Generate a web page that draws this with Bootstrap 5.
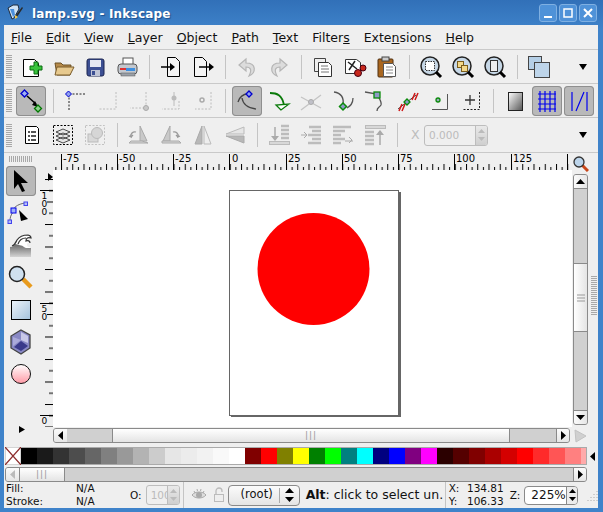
<!DOCTYPE html>
<html lang="en"><head><meta charset="utf-8"><title>lamp.svg - Inkscape</title>
<link rel="stylesheet" href="https://cdn.jsdelivr.net/npm/bootstrap@5.3.0/dist/css/bootstrap.min.css">
<style>
html,body{margin:0;background:#2f6db5;overflow:hidden}
body{font-family:"DejaVu Sans",sans-serif;font-size:12.5px;color:#000;line-height:1}
.win{width:603px;height:512px;background:linear-gradient(#3170b8,#3f83ca 30px);}
.title{height:25px;color:#fff;font-weight:700;font-size:12px;padding:3px 0 0 7px;text-shadow:1px 1px 1px #1d4f8d;letter-spacing:.2px}
.title>svg{margin:-3px 8px 0 0}
.wbtn{width:18px;height:18px;border:1px solid #7fb0e2;border-radius:3px;background:#4f92d8;margin-left:2px;padding:0;flex:none}
.wbtns{margin:-3px 6px 0 auto}
.body{margin:0 5px 4px 4px;height:483px;background:#efefef}
.menu{height:25px;border-bottom:1px solid #c9c9c9;padding:2px 0 0 0;color:#111}
.menu span{padding:0 7px}
.tbar{height:34px;border-bottom:1px solid #c9c9c9}
.tbar.t3{height:35px}
.grip{margin-left:2px;margin-right:3px;width:6px;height:23px;background:repeating-linear-gradient(#a8a8a8 0 1px,transparent 1px 2px)}
.tb{width:32px;height:32px;padding:0;border:0;border-radius:4px;flex:none}
.tb.on{position:relative;background:#b9b9b9;box-shadow:inset 0 0 0 1px #8f8f8f;width:30px;height:30px;margin:0 1px}
.sep{width:12px;height:24px;flex:none;background:linear-gradient(#c4c4c4,#c4c4c4) center/1px 100% no-repeat}
.more{width:30px;height:20px;flex:none}
.lbl{color:#bdbdbd}
.spin{border:1px solid #bdbdbd;border-radius:3px;background:#efefef;color:#bbb;overflow:hidden}
.spin .v{flex:1;padding-left:4px;overflow:hidden;white-space:nowrap}
.spin .ar{width:12px;height:100%;border-left:1px solid #bdbdbd;background:linear-gradient(#e9e9e9,#cfcfcf)}
.main{height:292px}
.left{width:36px}
.hgrip{width:23px;height:6px;margin:3px 0 3px 5px;background:repeating-linear-gradient(90deg,#a8a8a8 0 1px,transparent 1px 2px);flex:none}
.tool{width:30px;height:32px;flex:none;padding:0;border:0;margin-left:2px}
.tool.on{background:#b9b9b9;box-shadow:inset 0 0 0 1px #8f8f8f;border-radius:4px;height:30px;margin-bottom:2px;margin-top:1px}
.center{width:532px}
.vrul{width:13px;flex:none}
.canvas{width:519px;height:257px;background:#fff;flex:none}
.sb{border:1px solid #8a8a8a;border-radius:3px;background:#d0d0d0;overflow:hidden}
.st{background:linear-gradient(#fbfbfb,#e6e6e6);flex:none;width:13px;height:100%}
.thumb{background:linear-gradient(#fff,#e4e4e4);border-left:1px solid #8a8a8a;border-right:1px solid #8a8a8a;height:100%;color:#999;letter-spacing:1px;font-size:9px}
.hs{height:15px;width:517px;margin:1px 0 0 13px}
.scol{width:17px}
.vs{width:15px;height:251px;margin:2px 0 0 1px}
.vs .st{width:100%;height:14px;border-bottom:1px solid #8a8a8a;background:linear-gradient(90deg,#fbfbfb,#e6e6e6)}
.vs .st.dn{border-bottom:0;border-top:1px solid #8a8a8a}
.vthumb{height:69px;flex:none;background:linear-gradient(90deg,#fff,#e4e4e4);border-top:1px solid #8a8a8a;border-bottom:1px solid #8a8a8a;color:#999}
.vgrip{width:6px;height:39px;background:repeating-linear-gradient(#a8a8a8 0 1px,transparent 1px 2px);margin-left:2px}
.rcol{width:9px}
.pal{height:22px;padding-left:1px}
.sws{height:18px;border:1px solid #aaa;border-left:0;overflow:hidden;flex:none}
.sws i{display:block;width:16px;height:100%;flex:none}
.nocol{width:16px;height:18px;flex:none;background:#fff}
.ps{height:15px;width:582px;margin-left:1px;background:#d0d0d0}
.ps .thumb{width:46px;flex:none;border-left:1px solid #8a8a8a}
.status{height:26px;font-size:10.5px;padding-left:2px;color:#111}
.fs{width:124px;line-height:13px}
.fs b{font-weight:400;display:inline-block;width:70px}
.status .sep{height:26px;width:7px}
.combo{width:72px;height:21px;border:1px solid #8a8a8a;border-radius:4px;background:linear-gradient(#fbfbfb,#e4e4e4);font-size:11.5px}
.hint{font-size:12.5px;width:139px;white-space:nowrap;margin-left:6px}
.coord{line-height:13px;font-size:10.5px;width:57px}
.coord span{display:inline-block;width:15px}
.zoom{width:54px;height:19px;border:1px solid #8a8a8a;border-radius:4px;background:#fff;overflow:hidden;font-size:12px;margin-left:4px;flex:none}
.zoom .v{flex:1;padding-left:6px}
.zoom .ar{width:12px;height:100%;border-left:1px solid #8a8a8a;background:#ececec}
</style></head><body>
<div class="win d-flex flex-column">
<div class="title d-flex align-items-center">
<svg width="17" height="17" viewBox="0 0 17 17"><path d="M1 4 6 1h5l1 4-5 9-2 1z" fill="#cfe2f5" stroke="#1d2b3d"/><path d="M3 5l4 0 1 6-2 2z" fill="#4a8fdc"/><path d="M9 11 15 3l1 1-6 9z" fill="#2a2a2a"/><path d="M8 11l3 2-3 2z" fill="#f2c94c"/></svg>
<span>lamp.svg - Inkscape</span>
<div class="d-flex wbtns">
<div class="wbtn d-flex align-items-center justify-content-center"><svg width="12" height="12"><rect x="2" y="9" width="8" height="2" fill="#fff"/></svg></div>
<div class="wbtn d-flex align-items-center justify-content-center"><svg width="12" height="12"><rect x="2" y="2" width="8" height="8" fill="none" stroke="#fff" stroke-width="1.5"/></svg></div>
<div class="wbtn d-flex align-items-center justify-content-center"><svg width="12" height="12"><path d="M2 2l8 8M10 2l-8 8" stroke="#fff" stroke-width="2"/></svg></div>
</div></div>
<div class="body d-flex flex-column">
<nav class="menu d-flex align-items-center">
<span><u>F</u>ile</span><span><u>E</u>dit</span><span><u>V</u>iew</span><span><u>L</u>ayer</span><span><u>O</u>bject</span><span><u>P</u>ath</span><span><u>T</u>ext</span><span>Filter<u>s</u></span><span>Exte<u>n</u>sions</span><span><u>H</u>elp</span>
</nav>

<div class="tbar d-flex align-items-center">
<div class="grip"></div>
<button class="btn tb"><svg width="24" height="24" viewBox="0 0 24 24"><path d="M4.500 4.500h11l4 4v13h-15z" fill="#fff" stroke="#000"/><path d="M15 7h4v4h4v4h-4v4h-4v-4h-4v-4h4z" fill="#39c43c" stroke="#0b6a10"/></svg></button>
<button class="btn tb"><svg width="24" height="24" viewBox="0 0 24 24"><path d="M4 8h6l2 2h8l-1 10H6z" fill="#b68a4b" stroke="#6b5024"/><path d="M6 12h17l-4 8H4z" fill="#e7c98e" stroke="#7a5c2a"/></svg></button>
<button class="btn tb"><svg width="24" height="24" viewBox="0 0 24 24"><rect x="4" y="4" width="17" height="17" rx="2" fill="#3c4f93" stroke="#1b2450"/><rect x="7" y="5" width="11" height="7" fill="#e5e8f2"/><rect x="8" y="15" width="9" height="6" fill="#bfc4d6"/><rect x="9" y="16" width="3" height="4" fill="#3c4f93"/></svg></button>
<button class="btn tb"><svg width="24" height="24" viewBox="0 0 24 24"><rect x="8" y="3" width="10" height="7" fill="#fff" stroke="#555"/><rect x="3" y="9" width="19" height="10" rx="3" fill="#c3c8cf" stroke="#555"/><rect x="5" y="13" width="6" height="2" fill="#d33"/><rect x="11" y="13" width="9" height="3" fill="#3d8fe0"/><rect x="6" y="18" width="14" height="3" fill="#9aa0a8" stroke="#555" stroke-width=".5"/></svg></button>
<div class="sep"></div>
<button class="btn tb"><svg width="24" height="24" viewBox="0 0 24 24"><path d="M8.500 2.500h8l4 4v15h-12z" fill="#f4f4f4" stroke="#000"/><path d="M2 12h11" stroke="#000" stroke-width="1.500"/><path d="M11 8l5 4-5 4z"/></svg></button>
<button class="btn tb"><svg width="24" height="24" viewBox="0 0 24 24"><path d="M3.500 2.500h8l4 4v15h-12z" fill="#f4f4f4" stroke="#000"/><path d="M8 12h11" stroke="#000" stroke-width="1.500"/><path d="M18 8l5 4-5 4z"/></svg></button>
<div class="sep"></div>
<button class="btn tb"><svg width="24" height="24" viewBox="0 0 24 24"><path d="M11 4 4 10l7 6v-4c5 0 6 3 3 9 7-3 8-13-3-13z" fill="#dcdcdc" stroke="#b5b5b5" stroke-width="1.200"/></svg></button>
<button class="btn tb"><svg width="24" height="24" viewBox="0 0 24 24"><path d="M13 4l7 6-7 6v-4c-5 0-6 3-3 9-7-3-8-13 3-13z" fill="#dcdcdc" stroke="#b5b5b5" stroke-width="1.200"/></svg></button>
<div class="sep"></div>
<button class="btn tb"><svg width="24" height="24" viewBox="0 0 24 24"><path d="M3.500 3.500h11v13h-11z" fill="#eee" stroke="#444"/><path d="M7.500 7.500h10l3 3v11h-13z" fill="#fff" stroke="#333"/><path d="M10 11h7M10 14h8M10 17h8" stroke="#777"/></svg></button>
<button class="btn tb"><svg width="24" height="24" viewBox="0 0 24 24"><path d="M2.500 4.500h11l4 3v11h-15z" fill="#fff" stroke="#333"/><path d="M5 7l9 7M12 6l-6 9" stroke="#222" stroke-width="1.500"/><circle cx="15" cy="18" r="3.500" fill="#c8281c" stroke="#401"/><circle cx="20" cy="13" r="3" fill="#c8281c" stroke="#401"/></svg></button>
<button class="btn tb"><svg width="24" height="24" viewBox="0 0 24 24"><rect x="3" y="4" width="15" height="18" rx="1" fill="#a9661f" stroke="#4f2f10"/><rect x="7" y="2" width="7" height="4" fill="#ccc" stroke="#444"/><path d="M8.500 8.500h9l3 3v10h-12z" fill="#fff" stroke="#555"/><path d="M11 12h7M11 15h7M11 18h7" stroke="#888"/></svg></button>
<div class="sep"></div>
<button class="btn tb"><svg width="24" height="24" viewBox="0 0 24 24"><circle cx="11" cy="11" r="9" fill="#c6d7e6" stroke="#222" stroke-width="1.500"/><rect x="6.500" y="6.500" width="9" height="9" fill="#fff" stroke="#333" stroke-dasharray="1.500 1"/><path d="M17 17l5 5" stroke="#000" stroke-width="3"/></svg></button>
<button class="btn tb"><svg width="24" height="24" viewBox="0 0 24 24"><circle cx="11" cy="11" r="9" fill="#c6d7e6" stroke="#222" stroke-width="1.500"/><rect x="6.500" y="6.500" width="6" height="6" fill="#f2d88a" stroke="#7a5c1a"/><rect x="10.500" y="10.500" width="6" height="6" fill="#f2d88a" stroke="#7a5c1a"/><path d="M17 17l5 5" stroke="#000" stroke-width="3"/></svg></button>
<button class="btn tb"><svg width="24" height="24" viewBox="0 0 24 24"><circle cx="11" cy="11" r="9" fill="#c6d7e6" stroke="#222" stroke-width="1.500"/><rect x="7.500" y="5.500" width="7" height="11" fill="#eee" stroke="#333"/><path d="M17 17l5 5" stroke="#000" stroke-width="3"/></svg></button>
<div class="sep"></div>
<button class="btn tb"><svg width="24" height="24" viewBox="0 0 24 24"><rect x="1.500" y="1.500" width="13" height="13" fill="#b5cfe6" stroke="#444"/><rect x="7.500" y="7.500" width="15" height="15" fill="#bed5ea" stroke="#444"/></svg></button>
<div class="more ms-auto d-flex align-items-center justify-content-center"><svg width="12" height="8"><path d="M2 1h8L6 7z"/></svg></div>
</div>

<div class="tbar d-flex align-items-center">
<div class="grip"></div>
<button class="btn tb on"><svg width="24" height="24" viewBox="0 0 24 24"><path d="M5.500 1l3.500 3.500-3.500 3.500L2 4.500z" fill="#9fb0f5" stroke="#00c" stroke-width="1.300"/><path d="M8 7l9 8" stroke="#000" stroke-width="1.500"/><path d="M19 18l-6-2 3-4z"/><path d="M19 16l3.500 3.500-3.500 3.500-3.500-3.500z" fill="#8fd18f" stroke="#070" stroke-width="1.300"/></svg></button>
<div class="sep"></div>
<button class="btn tb"><svg width="24" height="24" viewBox="0 0 24 24"><path d="M6 5h16M6 5v17" stroke="#222" stroke-dasharray="2 1.500" fill="none"/><path d="M5.500 2l3 3-3 3-3-3z" fill="#8f9ff0" stroke="#00c"/></svg></button>
<button class="btn tb"><svg width="24" height="24" viewBox="0 0 24 24"><path d="M21 3v17H4" stroke="#bcbcbc" stroke-dasharray="2 1.500" fill="none"/></svg></button>
<button class="btn tb"><svg width="24" height="24" viewBox="0 0 24 24"><path d="M19 3v16H3" stroke="#bcbcbc" stroke-dasharray="2 1.500" fill="none"/><circle cx="19" cy="19" r="2.500" fill="#c8c8c8" stroke="#aaa"/></svg></button>
<button class="btn tb"><svg width="24" height="24" viewBox="0 0 24 24"><path d="M20 12v8H3" stroke="#bcbcbc" stroke-dasharray="2 1.500" fill="none"/><path d="M15 3v14" stroke="#bcbcbc"/><circle cx="15" cy="9" r="2.500" fill="#bcbcbc"/></svg></button>
<button class="btn tb"><svg width="24" height="24" viewBox="0 0 24 24"><path d="M20 3v17H4" stroke="#bcbcbc" stroke-dasharray="2 1.500" fill="none"/><rect x="9" y="9" width="4" height="4" rx="2" fill="none" stroke="#aaa" stroke-width="1.500"/></svg></button>
<div class="sep"></div>
<button class="btn tb on"><svg width="24" height="24" viewBox="0 0 24 24"><path d="M3 13c1-5 6-8 9-8M7 9c1 7 6 10 14 11" fill="none" stroke="#444" stroke-width="1.300"/><path d="M14 2l3 3-3 3-3-3z" fill="#8f9ff0" stroke="#00c" stroke-width="1.300"/></svg></button>
<button class="btn tb"><svg width="24" height="24" viewBox="0 0 24 24"><path d="M3 4c7 0 12 2 14 12" fill="none" stroke="#0a7a0a" stroke-width="1.800"/><path d="M14 21l-5-5 13-1z" fill="#fff" stroke="#0a7a0a" stroke-width="1.300"/></svg></button>
<button class="btn tb"><svg width="24" height="24" viewBox="0 0 24 24"><path d="M2 21 22 6M2 8l20 11" stroke="#c4c4c4" stroke-width="1.300"/><circle cx="12" cy="13" r="2.500" fill="#c0c0c8" stroke="#aaa"/></svg></button>
<button class="btn tb"><svg width="24" height="24" viewBox="0 0 24 24"><path d="M3 3c7 1 10 6 9 13M22 9c0 6-3 8-6 10" fill="none" stroke="#555" stroke-width="1.300"/><path d="M12 14l3.500 3.500-3.500 3.500-3.500-3.500z" fill="#8e9ac8" stroke="#0a8a0a" stroke-width="1.500"/></svg></button>
<button class="btn tb"><svg width="24" height="24" viewBox="0 0 24 24"><path d="M2 3l12 2c3 6 5 8 4 11-2 3-4 2-4 6" fill="none" stroke="#555" stroke-width="1.300"/><rect x="11" y="3" width="6" height="6" fill="#8e9ac8" stroke="#0a8a0a" stroke-width="1.300"/></svg></button>
<button class="btn tb"><svg width="24" height="24" viewBox="0 0 24 24"><path d="M3 20 21 6" stroke="#444"/><path d="M4 22l3-7M7 22l3-7M17 11l3-7M20 11l3-7" stroke="#d01818" stroke-width="1.500"/><path d="M12 10l3 3-3 3-3-3z" fill="#8e9ac8" stroke="#0a8a0a" stroke-width="1.300"/></svg></button>
<button class="btn tb"><svg width="24" height="24" viewBox="0 0 24 24"><path d="M20.500 5v15.500H5" fill="none" stroke="#555"/><circle cx="11" cy="11" r="2" fill="#9ab" stroke="#0a8a0a" stroke-width="1.300"/></svg></button>
<button class="btn tb"><svg width="24" height="24" viewBox="0 0 24 24"><path d="M20.500 3v17.500H3" fill="none" stroke="#222" stroke-dasharray="2 1.500"/><path d="M11 6v10M6 11h10" stroke="#333" stroke-width="1.300"/></svg></button>
<div class="sep"></div>
<button class="btn tb"><svg width="24" height="24" viewBox="0 0 24 24"><defs><linearGradient id="g1" x1="0" y1="0" x2="1" y2="1"><stop offset="0" stop-color="#fff"/><stop offset="1" stop-color="#555"/></linearGradient></defs><rect x="5.500" y="3.500" width="14" height="18" fill="url(#g1)" stroke="#222"/></svg></button>
<button class="btn tb on"><svg width="24" height="24" viewBox="0 0 24 24"><path d="M3 5h18M3 10h18M3 15h18M3 20h18M5 2v21M10 2v21M15 2v21M20 2v21" stroke="#00e" stroke-width="1.200"/></svg></button>
<button class="btn tb on"><svg width="24" height="24" viewBox="0 0 24 24"><path d="M5 3v19M20 3v19M9 22 17 3" stroke="#00e" stroke-width="1.200"/></svg></button>
</div>

<div class="tbar t3 d-flex align-items-center">
<div class="grip"></div>
<button class="btn tb"><svg width="24" height="24" viewBox="0 0 24 24"><path d="M6.500 3.500h11l2 2v15h-13z" fill="#fff" stroke="#000" stroke-linejoin="round"/><path d="M9 8h2v2H9zM12 8h5v2h-5zM9 12h2v2H9zM12 12h5v2h-5zM9 16h2v2H9zM12 16h5v2h-5z" fill="#555"/></svg></button>
<button class="btn tb"><svg width="24" height="24" viewBox="0 0 24 24"><rect x="2.500" y="2.500" width="19" height="19" fill="none" stroke="#000" stroke-dasharray="2 1.500"/><path d="M12 6l7 3-7 3-7-3zM12 10l7 3-7 3-7-3zM12 14l7 3-7 3-7-3z" fill="#e6e6e6" stroke="#222" stroke-width=".8"/></svg></button>
<button class="btn tb"><svg width="24" height="24" viewBox="0 0 24 24"><rect x="2.500" y="2.500" width="19" height="19" fill="none" stroke="#c2c2c2" stroke-dasharray="2 1.500"/><rect x="5" y="11" width="10" height="8" fill="#d8d8d8" stroke="#bbb"/><circle cx="14" cy="10" r="5.500" fill="#d6d6d6" stroke="#bbb"/></svg></button>
<div class="sep"></div>
<button class="btn tb"><svg width="24" height="24" viewBox="0 0 24 24"><path d="M13 3v15h7z" fill="#c9c9c9" stroke="#aaa"/><path d="M2 20h19l-6-2H4z" fill="#d6d6d6" stroke="#aaa"/><path d="M9 9a4 4 0 0 0-5 5l-2-1M4 14l2-2" fill="none" stroke="#999" stroke-width="1.300"/></svg></button>
<button class="btn tb"><svg width="24" height="24" viewBox="0 0 24 24"><path d="M11 3v15H4z" fill="#c9c9c9" stroke="#aaa"/><path d="M3 20h19l-2-2H3z" fill="#d6d6d6" stroke="#aaa"/><path d="M14 9a4 4 0 0 1 5 5l2-1M19 14l-2-2" fill="none" stroke="#999" stroke-width="1.300"/></svg></button>
<button class="btn tb"><svg width="24" height="24" viewBox="0 0 24 24"><path d="M11 3 4 21h7z" fill="#b8b8b8" stroke="#aaa"/><path d="M13 3l7 18h-7z" fill="#eee" stroke="#bbb"/></svg></button>
<button class="btn tb"><svg width="24" height="24" viewBox="0 0 24 24"><path d="M21 4 3 11h18z" fill="#e6e6e6" stroke="#bbb"/><path d="M21 20 3 13h18z" fill="#b8b8b8" stroke="#aaa"/></svg></button>
<div class="sep"></div>
<button class="btn tb"><svg width="24" height="24" viewBox="0 0 24 24"><path d="M14 3h8M14 7h8M14 11h8M14 15h8" stroke="#bcbcbc" stroke-width="2.500"/><path d="M8 4v12" stroke="#aaa" stroke-width="1.500"/><path d="M4 13l4 5 4-5z" fill="#aaa"/><rect x="2.500" y="18.500" width="20" height="3" fill="#d8d8d8" stroke="#bbb"/></svg></button>
<button class="btn tb"><svg width="24" height="24" viewBox="0 0 24 24"><path d="M10 4h12M13 8h9M9 12h13M13 16h9M9 20h13" stroke="#bcbcbc" stroke-width="2.500"/><path d="M2 12h6M5 9l3 3-3 3" stroke="#aaa" fill="none"/></svg></button>
<button class="btn tb"><svg width="24" height="24" viewBox="0 0 24 24"><path d="M2 4h18M2 8h12M2 12h8M2 16h12M2 20h8" stroke="#bcbcbc" stroke-width="2.500"/><path d="M14 18h8M18 14l3 3-3 3" stroke="#aaa" fill="none"/></svg></button>
<button class="btn tb"><svg width="24" height="24" viewBox="0 0 24 24"><rect x="2.500" y="2.500" width="20" height="3" fill="#d8d8d8" stroke="#bbb"/><path d="M2 9h9M2 13h9M2 17h9M2 21h9" stroke="#bcbcbc" stroke-width="2.500"/><path d="M17 8v14" stroke="#aaa" stroke-width="1.500"/><path d="M13 12l4-5 4 5z" fill="#aaa"/></svg></button>
<div class="sep"></div>
<span class="lbl ms-2" style="width:13px">X</span>
<div class="spin d-flex align-items-center" style="width:64px;height:21px;font-size:10.5px"><span class="v">0.000</span><div class="ar d-flex flex-column align-items-center justify-content-center gap-1"><svg width="7" height="4"><path d="M0 4h7L3.500 0z" fill="#bbb"/></svg><svg width="7" height="4"><path d="M0 0h7L3.500 4z" fill="#bbb"/></svg></div></div>
<div class="more ms-auto d-flex align-items-center justify-content-center"><svg width="12" height="8"><path d="M2 1h8L6 7z"/></svg></div>
</div>

<div class="main d-flex">
<div class="left d-flex flex-column">
<div class="hgrip"></div>
<button class="btn tool on"><svg width="24" height="26" viewBox="0 0 24 26"><path d="M5 2v19l4-5 4 8 3-1-4-8h7z" fill="#000"/></svg></button>
<button class="btn tool"><svg width="28" height="28" viewBox="0 0 28 28"><path d="M6 10c2-4 6-6 12-7M6 12c-2 3-3 5-3 9" fill="none" stroke="#666"/><rect x="4" y="8" width="5" height="5" fill="#9fb0f5" stroke="#00e"/><rect x="17" y="2" width="3.500" height="3.500" fill="#b3bef7" stroke="#44e"/><rect x="1" y="20" width="3.500" height="3.500" fill="#b3bef7" stroke="#44e"/><path d="M12 10l9 9-7 2z" fill="#000"/></svg></button>
<button class="btn tool"><svg width="24" height="26" viewBox="0 0 24 26"><defs><linearGradient id="g2" x1="0" y1="0" x2="0" y2="1"><stop offset="0" stop-color="#666"/><stop offset="1" stop-color="#d4d4d4"/></linearGradient></defs><path d="M1 14c3 0 5-2 6-5 2-5 7-8 12-7 2 .5 3 2 3 3-3-1-5 0-5 3 2-1 4 0 4 2-2-1-3 0-3 2s2 2 3 2v10H1z" fill="#fff"/><path d="M1 24V14c3 0 4-1 5-3 3 1 7 1 9 3 1 1 2 1 7 1v9z" fill="url(#g2)"/><path d="M3 13c3-1 4-4 5-6 2-3 6-5 11-5 2 .5 3 2 3 3-3-1-5 0-5 3 2-1 4 0 4 2M9 11c1-3 4-6 8-6" fill="none" stroke="#333" stroke-width="1.200"/></svg></button>
<button class="btn tool"><svg width="26" height="28" viewBox="0 0 26 28"><path d="M15 15l8 8" stroke="#e89a1c" stroke-width="4.500"/><circle cx="9" cy="10" r="7.500" fill="#cfe0ef" stroke="#222" stroke-width="1.500"/></svg></button>
<button class="btn tool"><svg width="24" height="24" viewBox="0 0 24 24"><defs><linearGradient id="g3" x1="0" y1="0" x2="1" y2="1"><stop offset="0" stop-color="#eef4fa"/><stop offset="1" stop-color="#a4c2dc"/></linearGradient></defs><rect x="2.500" y="2.500" width="19" height="19" fill="url(#g3)" stroke="#000"/></svg></button>
<button class="btn tool"><svg width="24" height="26" viewBox="0 0 24 26"><path d="M12 1l9 5v13l-9 6-10-6V7z" fill="#8888c4" stroke="#444" stroke-width="1.300"/><path d="M12 3l7 4v7l-7-3z" fill="#c8c8e8"/><path d="M4 8l8 3v0l-8 6z" fill="#aaaada"/><path d="M5 18l7-6 7 5-7 5z" fill="#3a3a8a"/></svg></button>
<button class="btn tool"><svg width="24" height="24" viewBox="0 0 24 24"><defs><linearGradient id="g4" x1="0" y1="0" x2="0" y2="1"><stop offset="0" stop-color="#fff"/><stop offset="1" stop-color="#ff9aa6"/></linearGradient></defs><circle cx="12" cy="12" r="9.500" fill="url(#g4)" stroke="#111"/></svg></button>
<div class="mt-auto d-flex justify-content-center" style="margin-bottom:11px;margin-left:-1px"><svg width="8" height="9"><path d="M1 1l6 3.500L1 8z"/></svg></div>
</div>
<div class="center d-flex flex-column">
<div class="d-flex" style="height:17px"><div class="vrul"></div>
<svg width="519" height="17" font-family="DejaVu Sans" font-size="10" style="flex:none"><defs><pattern id="hp" width="11.250" height="17" x="8" patternUnits="userSpaceOnUse"><rect width="1" height="6" y="11"/><rect x="5.625" width="1" height="3" y="14"/></pattern></defs><rect width="519" height="17" fill="url(#hp)"/><path d="M8 1v16M64 1v16M120 1v16M176.500 1v16M233 1v16M289 1v16M345 1v16M401.500 1v16M458 1v16M514 1v16" stroke="#000" shape-rendering="crispEdges"/><text x="10" y="9">-75</text><text x="66" y="9">-50</text><text x="122" y="9">-25</text><text x="179" y="9">0</text><text x="235" y="9">25</text><text x="291" y="9">50</text><text x="347" y="9">75</text><text x="403" y="9">100</text><text x="460" y="9">125</text></svg></div>
<div class="d-flex" style="height:257px">
<svg class="vrul" width="13" height="257" font-family="DejaVu Sans" font-size="9"><defs><pattern id="vp" width="13" height="22.500" y="9" patternUnits="userSpaceOnUse"><rect x="5" width="8" height="1" y="0"/><rect x="9" width="4" height="1" y="11.250"/></pattern></defs><rect width="13" height="257" fill="url(#vp)"/><path d="M0 20.500h13M0 133h13M0 245.500h13" stroke="#000" shape-rendering="crispEdges"/><path d="M8 3l5 4-5 4z"/><rect x="0" y="21" width="7" height="26" fill="#efefef"/><rect x="0" y="134" width="7" height="17" fill="#efefef"/><text x="1.500" y="28.500">1</text><text x="1.500" y="36.500">0</text><text x="1.500" y="44.500">0</text><text x="1.500" y="141.500">5</text><text x="1.500" y="149.500">0</text><text x="1.500" y="253.500">0</text></svg>
<svg class="canvas" viewBox="0 0 519 257"><rect x="178" y="22" width="170" height="225" fill="#666"/><rect x="176.500" y="20.500" width="169" height="225" fill="#fff" stroke="#666"/><circle cx="260.500" cy="99" r="56" fill="#f00"/></svg>
</div>
<div class="sb hs d-flex align-items-center">
<div class="st d-flex align-items-center justify-content-center"><svg width="6" height="9"><path d="M5 0v9L0 4.500z"/></svg></div>
<div style="width:45px;flex:none"></div>
<div class="thumb flex-grow-1 d-flex align-items-center justify-content-center">|||</div>
<div style="width:46px;flex:none"></div>
<div class="st d-flex align-items-center justify-content-center" style="border-left:1px solid #8a8a8a"><svg width="6" height="9"><path d="M1 0v9l5-4.500z"/></svg></div>
</div>
</div>
<div class="scol d-flex flex-column">
<div class="d-flex justify-content-center align-items-end" style="height:19px"><svg width="16" height="16" viewBox="0 0 16 16"><path d="M9 9l6 6" stroke="#c8471a" stroke-width="3"/><circle cx="6" cy="6" r="5" fill="#bcd4ea" stroke="#333" stroke-width="1.300"/></svg></div>
<div class="sb vs d-flex flex-column">
<div class="st d-flex align-items-center justify-content-center"><svg width="9" height="5"><path d="M0 5h9L4.500 0z"/></svg></div>
<div style="height:74px;flex:none"></div>
<div class="vthumb d-flex align-items-center justify-content-center"><svg width="8" height="8"><path d="M0 1h8M0 4h8M0 7h8" stroke="#999"/></svg></div>
<div class="flex-grow-1"></div>
<div class="st dn d-flex align-items-center justify-content-center"><svg width="9" height="5"><path d="M0 0h9L4.500 5z"/></svg></div>
</div>
<div class="d-flex justify-content-center" style="margin-top:4px"><svg width="13" height="14"><path d="M1 1l11 6-10 6z" fill="#d0d0d0" stroke="#c2c2c2" stroke-linejoin="round"/></svg></div>
</div>
<div class="rcol d-flex align-items-center"><div class="vgrip" style="margin-top:-8px"></div></div>
</div>

<div class="pal d-flex align-items-center">
<svg class="nocol" width="16" height="18"><rect width="16" height="18" fill="#fff" stroke="#aaa"/><path d="M0 0l16 18M16 0 0 18" stroke="#8e2f2f" stroke-width="1.300"/></svg>
<div class="sws d-flex" style="width:566px">
<i style="background:#000"></i><i style="background:#1a1a1a"></i><i style="background:#333"></i><i style="background:#4d4d4d"></i><i style="background:#666"></i><i style="background:#808080"></i><i style="background:#999"></i><i style="background:#b3b3b3"></i><i style="background:#ccc"></i><i style="background:#e6e6e6"></i><i style="background:#ececec"></i><i style="background:#f2f2f2"></i><i style="background:#f9f9f9"></i><i style="background:#fff"></i><i style="background:#800000"></i><i style="background:#f00"></i><i style="background:#808000"></i><i style="background:#ff0"></i><i style="background:#008000"></i><i style="background:#0f0"></i><i style="background:#008080"></i><i style="background:#0ff"></i><i style="background:#000080"></i><i style="background:#00f"></i><i style="background:#800080"></i><i style="background:#f0f"></i><i style="background:#2b0000"></i><i style="background:#500"></i><i style="background:#800000"></i><i style="background:#a00"></i><i style="background:#d40000"></i><i style="background:#f00"></i><i style="background:#ff2a2a"></i><i style="background:#f55"></i><i style="background:#ff8080"></i><i style="background:#faa"></i>
</div>
<div class="d-flex justify-content-center flex-grow-1"><svg width="6" height="9"><path d="M5 0v9L0 4.500z"/></svg></div>
</div>
<div class="sb ps d-flex align-items-center">
<div class="st d-flex align-items-center justify-content-center"><svg width="6" height="9"><path d="M5 0v9L0 4.500z" fill="#bbb"/></svg></div>
<div class="thumb d-flex align-items-center justify-content-center">|||</div>
<div class="flex-grow-1"></div>
<div class="st d-flex align-items-center justify-content-center" style="border-left:1px solid #8a8a8a"><svg width="6" height="9"><path d="M1 0v9l5-4.500z"/></svg></div>
</div>
<div class="status d-flex align-items-center">
<div class="fs"><b>Fill:</b>N/A<br><b>Stroke:</b>N/A</div>
<span>O:</span>
<div class="spin d-flex align-items-center ms-1" style="width:34px;height:20px"><span class="v">100</span><div class="ar d-flex flex-column align-items-center justify-content-center gap-1"><svg width="7" height="4"><path d="M0 4h7L3.500 0z" fill="#bbb"/></svg><svg width="7" height="4"><path d="M0 0h7L3.500 4z" fill="#bbb"/></svg></div></div>
<div class="sep"></div>
<svg width="16" height="16" viewBox="0 0 16 16" class="ms-1"><path d="M1 8c3-4 11-4 14 0-3 4-11 4-14 0z" fill="#ddd" stroke="#aaa"/><circle cx="8" cy="8" r="3" fill="#aaa"/><path d="M3 4l1 2M6 2l.5 2M10 2l-.5 2M13 4l-1 2" stroke="#aaa"/></svg>
<svg width="14" height="16" viewBox="0 0 14 16" style="margin-left:5px"><rect x="2.500" y="7.500" width="9" height="7" fill="#eee" stroke="#bbb"/><path d="M4 7V4a3 3 0 0 1 6 0v1" fill="none" stroke="#bbb" stroke-width="1.300"/></svg>
<div class="combo d-flex align-items-center" style="margin-left:2px"><span class="flex-grow-1 text-center" style="padding-left:6px">(root)</span><div class="d-flex flex-column align-items-center justify-content-center gap-1" style="width:20px;border-left:1px solid #aaa;height:15px"><svg width="9" height="5"><path d="M0 5h9L4.500 0z"/></svg><svg width="9" height="5"><path d="M0 0h9L4.500 5z"/></svg></div></div>
<div class="hint"><b>Alt</b>: click to select un.</div>
<div class="sep" style="width:1px;margin-right:3px"></div>
<div class="coord"><span>X:</span> 134.81<br><span>Y:</span> 106.33</div>
<span class="ms-1">Z:</span>
<div class="zoom d-flex align-items-center"><span class="v">225%</span><div class="ar d-flex flex-column align-items-center justify-content-center gap-1"><svg width="7" height="4"><path d="M0 4h7L3.500 0z"/></svg><svg width="7" height="4"><path d="M0 0h7L3.500 4z"/></svg></div></div>
<svg class="ms-auto" width="13" height="13"><path d="M12 2v1M9 5v1M12 5v1M6 8v1M9 8v1M12 8v1M3 11v1M6 11v1M9 11v1M12 11v1" stroke="#aaa"/></svg>
</div>
</div></div>
</body></html>
